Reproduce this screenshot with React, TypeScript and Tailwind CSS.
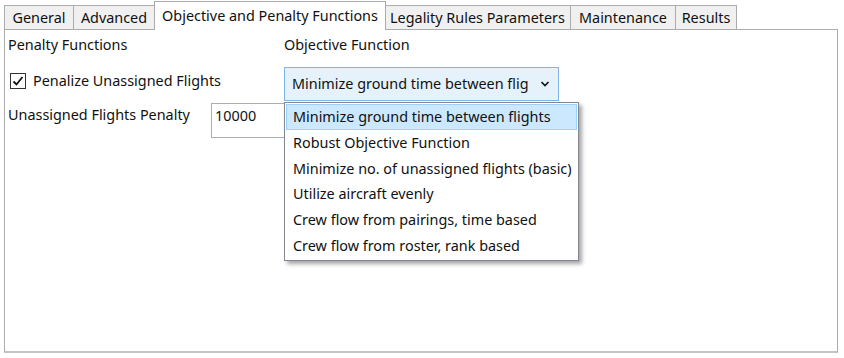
import React from 'react';

const tabs = [
  { label: 'General', w: 'w-[70px]' },
  { label: 'Advanced', w: 'w-[82px]' },
  { label: 'Objective and Penalty Functions', w: 'w-[232px]', active: true },
  { label: 'Legality Rules Parameters', w: 'w-[187px]' },
  { label: 'Maintenance', w: 'w-[106px]' },
  { label: 'Results', w: 'w-[62px]' },
];

const options = [
  'Minimize ground time between flights',
  'Robust Objective Function',
  'Minimize no. of unassigned flights (basic)',
  'Utilize aircraft evenly',
  'Crew flow from pairings, time based',
  'Crew flow from roster, rank based',
];

const App: React.FC = () => {
  return (
    <div className="w-[844px] h-[358px] bg-white text-[14.4px] text-[#111] overflow-hidden" style={{ fontFamily: '"Noto Sans", "Open Sans", sans-serif' }}>
      {/* Tab strip */}
      <div className="flex items-end pl-[4px] h-[29px]">
        {tabs.map((t) =>
          t.active ? (
            <div key={t.label} className={`${t.w} h-[29px] bg-white border border-b-0 border-[#acacac] flex items-center justify-center relative top-[1px] z-10 -mx-[1px]`}>
              {t.label}
            </div>
          ) : (
            <div key={t.label} className={`${t.w} h-[24px] bg-[#f0f0f0] border border-b-0 border-[#acacac] -ml-[1px] first:ml-0 flex items-center justify-center`}>
              {t.label}
            </div>
          )
        )}
      </div>

      {/* Tab panel */}
      <div className="relative ml-[4px] w-[834px] h-[324px] border border-[#acacac] border-b-2 border-b-[#c4c4c4] bg-white">
        <div className="flex">
          {/* Penalty column */}
          <div className="w-[279px] shrink-0 pl-[3px] pt-[4px]">
            <div className="h-[22px] leading-[22px]">Penalty Functions</div>
            <div className="flex items-center gap-[7px] mt-[15px] pl-[2px] h-[20px]">
              <div className="w-[16px] h-[16px] border border-[#333] bg-white flex items-center justify-center">
                <svg width="12" height="12" viewBox="0 0 12 12">
                  <path d="M1.5 6.5 L4.5 9.5 L10.5 2" fill="none" stroke="#111" strokeWidth="1.8" />
                </svg>
              </div>
              <span>Penalize Unassigned Flights</span>
            </div>
            <div className="flex items-start mt-[12px]">
              <span className="w-[203px] shrink-0 leading-[22px] pt-[1px]">Unassigned Flights Penalty</span>
              <div className="w-[80px] shrink-0 h-[35px] border border-[#abadb3] px-[3px] leading-[22px] pt-[1px]">10000</div>
            </div>
          </div>

          {/* Objective column */}
          <div className="pt-[4px] relative z-10 bg-transparent">
            <div className="h-[22px] leading-[22px]">Objective Function</div>
            <div className="mt-[11px] w-[275px] h-[34px] border border-[#7eb4ea] bg-[#e5f1fb] flex items-center pl-[7px] pr-[8px]">
              <span className="w-[236px] overflow-hidden whitespace-nowrap">Minimize ground time between flights</span>
              <svg className="ml-auto" width="10" height="8" viewBox="0 0 10 8">
                <path d="M1.5 2 L5 5.5 L8.5 2" fill="none" stroke="#111" strokeWidth="1.6" />
              </svg>
            </div>
          </div>
        </div>

        {/* Open dropdown list */}
        <div className="absolute left-[279px] top-[72px] w-[295px] bg-white border border-[#828790] p-[1px] shadow-[3px_3px_4px_rgba(0,0,0,0.35)] z-20">
          {options.map((o, i) => (
            <div
              key={o}
              className={`h-[25.8px] flex items-center pl-[6px] whitespace-nowrap border ${i === 0 ? 'bg-[#cce8ff] border-[#99d1ff]' : 'border-transparent'}`}
            >
              {o}
            </div>
          ))}
        </div>
      </div>
    </div>
  );
};

export default App;
